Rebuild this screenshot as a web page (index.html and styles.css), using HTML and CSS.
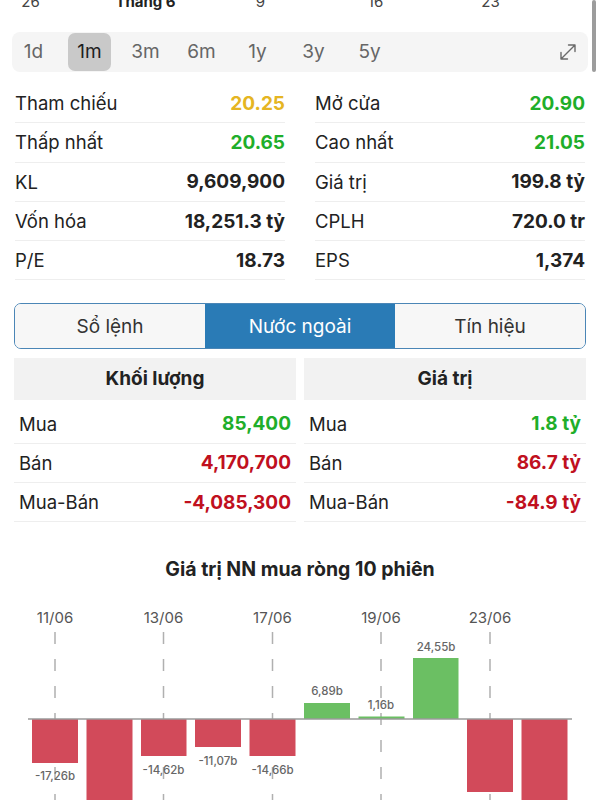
FILE: index.html
```html
<!DOCTYPE html>
<html lang="vi">
<head>
  <meta charset="UTF-8" />
  <title>Chi tiết cổ phiếu</title>
  <meta name="viewport" content="width=device-width, initial-scale=1.0" />
  <link rel="stylesheet" href="styles.css">
</head>
<body>

  <div class="scroll-thumb"></div>

  <div class="axis">
    <span>26</span>
    <span class="month">Tháng 6</span>
    <span>9</span>
    <span>16</span>
    <span>23</span>
  </div>

  <div class="range-bar">
    <span class="range-item">1d</span>
    <span class="range-item active">1m</span>
    <span class="range-item">3m</span>
    <span class="range-item">6m</span>
    <span class="range-item">1y</span>
    <span class="range-item">3y</span>
    <span class="range-item">5y</span>
    <svg class="expand-icon" width="20" height="20" viewBox="0 0 20 20">
      <path d="M3 17 L17 3 M10.5 3 H17 V9.5 M3 10.5 V17 H9.5" fill="none" stroke="#6a6a6a" stroke-width="1.4" stroke-linecap="round" stroke-linejoin="round" />
    </svg>
  </div>

  <div class="stats">
    <div class="stat-col">
      <div class="stat-row"><span>Tham chiếu</span><b class="ref">20.25</b></div>
      <div class="stat-row"><span>Thấp nhất</span><b class="up">20.65</b></div>
      <div class="stat-row"><span>KL</span><b>9,609,900</b></div>
      <div class="stat-row"><span>Vốn hóa</span><b>18,251.3 tỷ</b></div>
      <div class="stat-row"><span>P/E</span><b>18.73</b></div>
    </div>
    <div class="stat-col">
      <div class="stat-row"><span>Mở cửa</span><b class="up">20.90</b></div>
      <div class="stat-row"><span>Cao nhất</span><b class="up">21.05</b></div>
      <div class="stat-row"><span>Giá trị</span><b>199.8 tỷ</b></div>
      <div class="stat-row"><span>CPLH</span><b>720.0 tr</b></div>
      <div class="stat-row"><span>EPS</span><b>1,374</b></div>
    </div>
  </div>

  <div class="tabs">
    <div class="tab">Sổ lệnh</div>
    <div class="tab active">Nước ngoài</div>
    <div class="tab">Tín hiệu</div>
  </div>

  <div class="foreign">
    <div class="foreign-col">
      <div class="foreign-head">Khối lượng</div>
      <div class="foreign-row"><span>Mua</span><b class="up">85,400</b></div>
      <div class="foreign-row"><span>Bán</span><b class="down">4,170,700</b></div>
      <div class="foreign-row"><span>Mua-Bán</span><b class="down">-4,085,300</b></div>
    </div>
    <div class="foreign-col">
      <div class="foreign-head">Giá trị</div>
      <div class="foreign-row"><span>Mua</span><b class="up">1.8 tỷ</b></div>
      <div class="foreign-row"><span>Bán</span><b class="down">86.7 tỷ</b></div>
      <div class="foreign-row"><span>Mua-Bán</span><b class="down">-84.9 tỷ</b></div>
    </div>
  </div>

  <h2 class="chart-title">Giá trị NN mua ròng 10 phiên</h2>

  <svg class="chart" width="600" height="210" viewBox="0 0 600 210">
    <g class="grid-lines">
      <line x1="55" y1="41" x2="55" y2="210" />
      <line x1="163.5" y1="41" x2="163.5" y2="210" />
      <line x1="272.5" y1="41" x2="272.5" y2="210" />
      <line x1="381" y1="41" x2="381" y2="210" />
      <line x1="490" y1="41" x2="490" y2="210" />
    </g>
    <g class="dates">
      <text x="55" y="32">11/06</text>
      <text x="163.5" y="32">13/06</text>
      <text x="272.5" y="32">17/06</text>
      <text x="381" y="32">19/06</text>
      <text x="490" y="32">23/06</text>
    </g>
    <g class="bars">
      <rect class="neg" x="32" y="128" width="46" height="44" />
      <rect class="neg" x="86.5" y="128" width="46" height="100" />
      <rect class="neg" x="141" y="128" width="45.5" height="37" />
      <rect class="neg" x="195" y="128" width="46" height="28" />
      <rect class="neg" x="249.5" y="128" width="46" height="37" />
      <rect class="pos" x="304" y="112" width="46" height="16" />
      <rect class="pos" x="358.5" y="125.5" width="46" height="2.5" />
      <rect class="pos" x="413" y="67" width="45.5" height="61" />
      <rect class="neg" x="467" y="128" width="46" height="73" />
      <rect class="neg" x="521.5" y="128" width="46" height="100" />
    </g>
    <line class="zero" x1="28" y1="128" x2="572" y2="128" />
    <g class="values">
      <text x="55" y="189">-17,26b</text>
      <text x="163.5" y="183">-14,62b</text>
      <text x="218" y="174">-11,07b</text>
      <text x="272.5" y="183">-14,66b</text>
      <text x="327" y="104">6,89b</text>
      <text x="381" y="118">1,16b</text>
      <text x="436" y="60">24,55b</text>
    </g>
  </svg>

</body>
</html>
```

FILE: styles.css
```css
body {
  font-family: "Inter", "Noto Sans", sans-serif;
  background-color: #fff;
  color: #222;
  margin: 0;
  width: 600px;
  overflow: hidden;
}

.scroll-thumb {
  position: absolute;
  top: 0;
  left: 592px;
  width: 4px;
  height: 72px;
  border-radius: 2px;
  background-color: #9c9c9c;
}

/* trục thời gian của biểu đồ giá, bị cắt ở phía trên */
.axis {
  display: grid;
  grid-template-columns: repeat(5, 115px);
  margin-left: -27px;
  margin-top: -6px;
  height: 16px;
  line-height: 16px;
  font-size: 15px;
  color: #444;
  text-align: center;
}

.axis .month {
  font-weight: bold;
  color: #222;
}

.range-bar {
  display: flex;
  align-items: center;
  gap: 13px;
  height: 40px;
  margin: 22px 12px 0;
  background-color: #f5f5f5;
  border-radius: 8px;
}

.range-item {
  width: 43px;
  height: 38px;
  line-height: 38px;
  text-align: center;
  font-size: 19px;
  color: #666;
  border-radius: 7px;
}

.range-item.active {
  background-color: #c9c9c9;
  color: #1e1e1e;
}

.expand-icon {
  margin-left: auto;
  margin-right: 10px;
}

.stats {
  display: grid;
  grid-template-columns: 1fr 1fr;
  gap: 30px;
  padding: 12px 15px 0;
}

.stat-row {
  display: flex;
  justify-content: space-between;
  align-items: center;
  height: 39.3px;
  box-sizing: border-box;
  border-bottom: 1px solid #eeeeee;
  font-size: 18.5px;
}

.stat-row b, .foreign-row b {
  font-weight: 700;
  font-size: 19px;
}

.ref {
  color: #e5b522;
}

.up {
  color: #1fae2a;
}

.down {
  color: #c0101e;
}

.tabs {
  display: flex;
  margin: 23px 14px 0;
  height: 46px;
  border: 1.5px solid #4b86b6;
  border-radius: 7px;
  overflow: hidden;
  box-sizing: border-box;
}

.tab {
  flex: 1;
  display: flex;
  align-items: center;
  justify-content: center;
  font-size: 19px;
  color: #333;
  background-color: #f7f7f7;
}

.tab.active {
  background-color: #2a7bb6;
  color: #fff;
}

.foreign {
  display: grid;
  grid-template-columns: 1fr 1fr;
  gap: 8px;
  margin: 9px 14px 0;
}

.foreign-head {
  height: 42px;
  line-height: 42px;
  text-align: center;
  font-size: 19px;
  font-weight: 700;
  background-color: #f2f2f2;
  margin-bottom: 4px;
}

.foreign-row {
  display: flex;
  justify-content: space-between;
  align-items: center;
  height: 39.3px;
  padding: 0 5px;
  box-sizing: border-box;
  border-bottom: 1px solid #eeeeee;
  font-size: 18.5px;
}

.chart-title {
  margin: 36px 0 0;
  font-size: 19.5px;
  line-height: 22px;
  font-weight: 700;
  text-align: center;
}

.chart {
  display: block;
  margin-top: 11px;
}

.grid-lines line {
  stroke: #b0b0b0;
  stroke-width: 1.5;
  stroke-dasharray: 12 15;
}

.dates text {
  font-size: 15px;
  fill: #555;
  text-anchor: middle;
}

.bars .neg {
  fill: #d24a5a;
}

.bars .pos {
  fill: #6bbf63;
}

.zero {
  stroke: #9a9a9a;
  stroke-width: 1.5;
}

.values text {
  font-size: 11.5px;
  font-weight: 500;
  fill: #666;
  text-anchor: middle;
}
```
